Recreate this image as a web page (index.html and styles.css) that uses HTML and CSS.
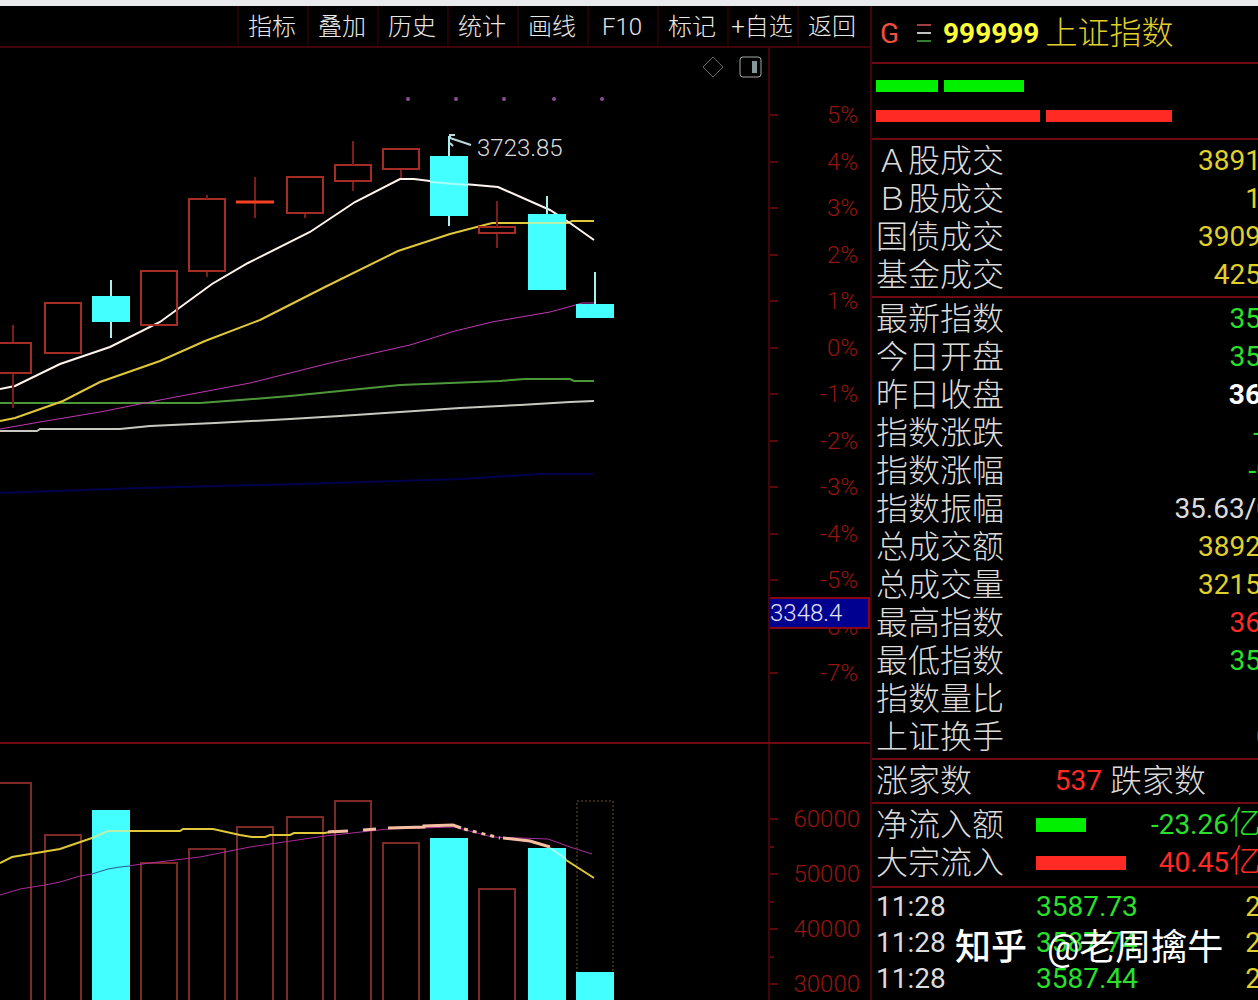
FILE: index.html
```html
<!DOCTYPE html>
<html lang="zh-CN">
<head>
<meta charset="utf-8">
<meta name="viewport" content="width=device-width, initial-scale=1">
<title>上证指数 999999</title>
<link rel="stylesheet" href="styles.css">
</head>
<body>
<div class="strip"></div>
<div class="terminal">
  <main class="charts">
    <nav class="toolbar">
      <button type="button">指标</button>
      <button type="button">叠加</button>
      <button type="button">历史</button>
      <button type="button">统计</button>
      <button type="button">画线</button>
      <button type="button">F10</button>
      <button type="button">标记</button>
      <button type="button">+自选</button>
      <button type="button">返回</button>
    </nav>

    <section class="panel price">
      <svg class="plot" viewBox="0 48 768 694" role="img" aria-label="K线图">
        <g class="ma">
          <polyline class="navy" points="0,493 140,488 300,484 460,479 540,474 594,474"/>
          <polyline class="pale" points="0,431 37,431 40,429 120,429 150,426 215,423 290,419 340,416 400,412 460,408 520,405 570,402 594,401"/>
          <polyline class="green" points="0,403 200,403 240,400 290,396 340,391 400,385 500,381 525,379 570,379 574,381 594,381"/>
          <polyline class="magenta" points="0,429 40,422 100,412 160,400 250,383 330,363 410,345 455,331 492,322 550,312 572,306 582,303 594,303"/>
          <polyline class="yellow" points="0,421 15,418 63,401 100,382 160,361 205,341 260,320 325,287 398,251 450,234 492,223 568,223 572,221 594,221"/>
          <polyline class="white" points="0,389 15,386 60,364 110,347 160,322 212,284 248,263 310,232 355,202 400,179 414,179 430,181 498,187 550,210 570,223 594,240"/>
        </g>
        <g class="up">
          <rect x="-5" y="343" width="36" height="30"/><path d="M13 325V342M13 374V408"/>
          <rect x="45" y="303" width="36" height="50"/>
          <rect x="141" y="271" width="36" height="54"/>
          <rect x="189" y="199" width="36" height="72"/><path d="M207 195V199M207 272V277"/>
          <path d="M255 177V218"/>
          <rect x="287" y="177" width="36" height="36"/><path d="M305 214V218"/>
          <rect x="335" y="165" width="36" height="16"/><path d="M353 141V165M353 182V191"/>
          <rect x="383" y="149" width="36" height="20"/><path d="M401 170V178"/>
          <rect x="479" y="227" width="36" height="6"/><path d="M497 201V227M497 234V248"/>
        </g>
        <path class="doji" d="M236 202H274"/>
        <g class="wick"><path d="M111 280V338M449 136V226M547 196V214M595 272V304"/></g>
        <g class="down">
          <rect x="92" y="296" width="38" height="26"/>
          <rect x="430" y="156" width="38" height="60"/>
          <rect x="528" y="214" width="38" height="76"/>
          <rect x="576" y="304" width="38" height="14"/>
        </g>
        <path class="ghost" d="M430 182L468 185"/>
        <path class="ghost-warm" d="M528 223H566"/>
        <path class="pointer" d="M455 135H450V138L471 145M450 143L453 146"/>
        <text class="peak" x="477" y="156">3723.85</text>
        <g class="dots">
          <circle cx="408" cy="99" r="2"/><circle cx="456" cy="99" r="2"/><circle cx="504" cy="99" r="2"/><circle cx="554" cy="99" r="2"/><circle cx="602" cy="99" r="2"/>
        </g>
        <path class="diamond" d="M713 57L723 67L713 77L703 67Z"/>
        <rect class="pane" x="740" y="57" width="21" height="20" rx="3"/>
        <rect class="pane-fill" x="752" y="61" width="5" height="12"/>
      </svg>
      <div class="axis">
        <ol class="scale percent">
          <li>5%</li><li>4%</li><li>3%</li><li>2%</li><li>1%</li><li>0%</li><li>-1%</li><li>-2%</li><li>-3%</li><li>-4%</li><li>-5%</li><li>-6%</li><li>-7%</li>
        </ol>
        <output class="cursor">3348.4</output>
      </div>
    </section>

    <section class="panel volume">
      <svg class="plot" viewBox="0 744 768 256" role="img" aria-label="成交量">
        <g class="up">
          <rect x="-5" y="783" width="36" height="230"/>
          <rect x="45" y="835" width="36" height="180"/>
          <rect x="141" y="863" width="36" height="150"/>
          <rect x="189" y="849" width="36" height="160"/>
          <rect x="237" y="827" width="36" height="180"/>
          <rect x="287" y="817" width="36" height="190"/>
          <rect x="335" y="801" width="36" height="210"/>
          <rect x="383" y="843" width="36" height="170"/>
          <rect x="479" y="889" width="36" height="120"/>
        </g>
        <rect class="forecast" x="577" y="801" width="36" height="180"/>
        <g class="ma">
          <polyline class="magenta" points="0,895 20,889 45,885 60,882 80,876 92,874 120,867 150,863 200,857 250,847 325,836 388,829 455,827 492,837 548,839 570,847 592,854"/>
          <polyline class="yellow" points="0,863 12,857 30,854 60,849 92,838 110,831 180,831 183,829 213,829 240,835 252,837 265,837 270,835 290,835 294,833 325,833 334,831"/>
          <polyline class="yellow" points="552,849 566,860 594,878"/>
          <polyline class="peach" points="328,832 348,831"/>
          <polyline class="peach" points="363,830 376,829"/>
          <polyline class="peach" points="388,828 424,827 424,826 453,825 461,828"/>
          <polyline class="peach dashed" points="464,829 500,838"/>
          <polyline class="peach" points="503,838 530,841 550,847"/>
        </g>
        <g class="down">
          <rect x="92" y="810" width="38" height="190"/>
          <rect x="430" y="838" width="38" height="162"/>
          <rect x="528" y="848" width="38" height="152"/>
          <rect x="576" y="972" width="38" height="28"/>
        </g>
        <polyline class="ghost-warm" points="92,838 108,831 130,831"/>
        <polyline class="shade" points="92,874 108,869 120,867 130,866"/>
        <path class="ghost" d="M550 848L566 859"/>
      </svg>
      <div class="axis">
        <ol class="scale amount">
          <li>60000</li><li>50000</li><li>40000</li><li>30000</li>
        </ol>
      </div>
    </section>
  </main>

  <aside class="quote">
    <header class="title">
      <span class="flag">G</span>
      <svg class="menu" viewBox="0 0 16 20" aria-hidden="true"><path class="m1" d="M1 2H15"/><path class="m2" d="M1 10H15"/><path class="m3" d="M1 18H15"/></svg>
      <span class="code">999999</span>
      <h1>上证指数</h1>
    </header>

    <div class="meters">
      <div class="meter"><i class="fill fall" style="width:62px"></i><i class="fill fall" style="width:80px"></i></div>
      <div class="meter"><i class="fill rise" style="width:164px"></i><i class="fill rise" style="width:126px"></i></div>
    </div>

    <table class="block">
      <tr><th scope="row">Ａ股成交</th><td class="gold">3891</td></tr>
      <tr><th scope="row">Ｂ股成交</th><td class="gold">1</td></tr>
      <tr><th scope="row">国债成交</th><td class="gold">3909</td></tr>
      <tr><th scope="row">基金成交</th><td class="gold">425</td></tr>
    </table>

    <table class="block">
      <tr><th scope="row">最新指数</th><td class="lime">35</td></tr>
      <tr><th scope="row">今日开盘</th><td class="lime">35</td></tr>
      <tr><th scope="row">昨日收盘</th><td class="strong">36</td></tr>
      <tr><th scope="row">指数涨跌</th><td class="lime">-</td></tr>
      <tr><th scope="row">指数涨幅</th><td class="lime"><span class="cut">-0</span></td></tr>
      <tr><th scope="row">指数振幅</th><td><span class="cut">35.63/0</span></td></tr>
      <tr><th scope="row">总成交额</th><td class="gold">3892</td></tr>
      <tr><th scope="row">总成交量</th><td class="gold">3215</td></tr>
      <tr><th scope="row">最高指数</th><td class="red">36</td></tr>
      <tr><th scope="row">最低指数</th><td class="lime">35</td></tr>
      <tr><th scope="row">指数量比</th><td></td></tr>
      <tr><th scope="row">上证换手</th><td><span class="cut">0</span></td></tr>
    </table>

    <div class="block breadth">
      <span class="name">涨家数</span><span class="count red">537</span><span class="name">跌家数</span>
    </div>

    <table class="block flow">
      <tr><th scope="row">净流入额</th><td class="bar"><i class="fill fall" style="width:50px"></i></td><td class="lime">-23.26<span class="unit">亿</span></td></tr>
      <tr><th scope="row">大宗流入</th><td class="bar"><i class="fill rise" style="width:90px"></i></td><td class="red">40.45<span class="unit">亿</span></td></tr>
    </table>

    <table class="ticks">
      <tr><td>11:28</td><td class="deal lime">3587.73</td><td class="gold">2</td></tr>
      <tr><td>11:28</td><td class="deal lime">3587.74</td><td class="gold">2</td></tr>
      <tr><td>11:28</td><td class="deal lime">3587.44</td><td class="gold">2</td></tr>
    </table>

    <div class="credit"><b>知乎</b><span>@老周擒牛</span></div>
  </aside>
</div>
</body>
</html>
```
FILE: styles.css
```css
:root {
  --line: #6e0a10;
  --line-dim: #420408;
  --red: #ff2a24;
  --lime: #2be02b;
  --gold: #e0d02c;
  --text: #dcdcdc;
  --cyan: #44ffff;
}

* { box-sizing: border-box; }

body {
  margin: 0;
  background: #000;
  color: var(--text);
  font-family: Roboto, "Noto Sans CJK SC", sans-serif;
  font-size: 28px;
}

.strip { height: 6px; background: #e8eaec; }

.terminal {
  display: grid;
  grid-template-columns: minmax(0, 1fr) 388px;
  overflow: hidden;
}

/* Toolbar */
.toolbar {
  display: flex;
  justify-content: flex-end;
  height: 42px;
  padding-right: 3px;
  border-bottom: 2px solid var(--line-dim);
}

.toolbar button {
  width: 70px;
  padding: 2px 2px 0 0;
  border: 0;
  border-left: 2px solid #200204;
  background: none;
  color: #e8e8e8;
  font: 300 24px/38px Roboto, "Noto Sans CJK SC", sans-serif;
  white-space: nowrap;
}

/* Charts */
.panel {
  display: grid;
  grid-template-columns: minmax(0, 1fr) 102px;
}

.price { border-bottom: 2px solid var(--line); }

.plot { display: block; width: 100%; height: auto; }

.axis {
  position: relative;
  border-left: 2px solid var(--line-dim);
}

.scale {
  display: flex;
  flex-direction: column;
  height: 100%;
  margin: 0;
  padding: 0 12px 0 0;
  list-style: none;
  color: #96160f;
  font-size: 24px;
  font-weight: 300;
  text-align: right;
}

.scale li { position: relative; }

.scale li::before,
.amount li::after {
  content: "";
  position: absolute;
  left: 0;
  top: 50%;
  width: 8px;
  height: 2px;
  margin-top: -1px;
  background: #5a080a;
}

.percent { justify-content: space-between; padding-top: 51px; padding-bottom: 53px; }
.percent li { line-height: 32px; }

.amount { gap: 27px; padding-top: 61px; padding-right: 10px; }
.amount li { line-height: 28px; }
.amount li::after { top: 42px; width: 4px; }

.cursor {
  position: absolute;
  top: 549px;
  left: 0;
  right: 0;
  border: 2px solid #8a0418;
  border-width: 2px 2px 2px 0;
  background: #000090;
  color: #e4e0f0;
  font-size: 24px;
  font-weight: 300;
  line-height: 28px;
}

.ma polyline { fill: none; stroke-width: 2; }
.ma .white { stroke: #fff4ee; }
.ma .pale { stroke: #c8c8c0; }
.ma .yellow { stroke: #e0c838; }
.ma .green { stroke: #4c9838; }
.ma .magenta { stroke: #a82c9c; stroke-width: 1; }
.price .ma .magenta { stroke: #c038b4; }
.ma .navy { stroke: #00004c; }
.ma .peach { stroke: #f6bea0; stroke-width: 3; }
.ma .dashed { stroke-dasharray: 4 5; }

.up { fill: none; stroke: #a42c24; stroke-width: 2; shape-rendering: crispEdges; }
.up path { stroke: #7c1c18; }
.volume .up { stroke: #7e2a24; }
.doji { stroke: #f84024; stroke-width: 3; }
.down { fill: var(--cyan); }
.wick { stroke: #a8f0f0; stroke-width: 2; }
.ghost { fill: none; stroke: #a8ffff; stroke-width: 2; }
.ghost-warm { fill: none; stroke: #b8f0b0; stroke-width: 2; }
.shade { fill: none; stroke: #285c90; stroke-width: 1; }
.forecast { fill: none; stroke: #6c5024; stroke-dasharray: 2 2; }
.pointer { fill: none; stroke: #b8dcdc; stroke-width: 2; }
.peak { fill: var(--text); font-size: 24px; font-weight: 300; }
.dots { fill: #8c4c98; }
.diamond { fill: none; stroke: #686868; }
.pane { fill: none; stroke: #a4a8a8; stroke-width: 1; }
.pane-fill { fill: #84989c; }

/* Quote column */
.quote {
  position: relative;
  overflow: hidden;
  border-left: 2px solid var(--line-dim);
}

.title {
  display: flex;
  align-items: center;
  height: 58px;
  padding: 0 0 2px 8px;
  border-bottom: 2px solid var(--line);
}

.flag { width: 36px; color: #f0503c; }
.menu { width: 16px; height: 20px; margin-right: 11px; fill: none; stroke-width: 2; }
.m1 { stroke: #a04040; }
.m2 { stroke: #c0c0c0; }
.m3 { stroke: #308030; }
.code { margin-right: 6px; color: #ffff38; font-weight: 700; }
.title h1 { margin: 0; color: var(--gold); font-size: 32px; font-weight: 300; line-height: 48px; }

.meters {
  display: grid;
  gap: 18px;
  padding: 16px 4px;
  border-bottom: 2px solid var(--line);
}

.meter { display: flex; gap: 6px; }
.fill { display: block; height: 12px; }
.fall { background: #00f000; }
.rise { background: var(--red); }

.block,
.ticks {
  width: calc(100% + 3px);
  border-spacing: 0;
}

.block { padding: 2px 0 2px 4px; border-bottom: 2px solid var(--line); }

th, td {
  height: 38px;
  padding: 0;
  line-height: 38px;
  font-weight: 400;
  vertical-align: middle;
  white-space: nowrap;
  text-align: right;
}

th, .name {
  font-size: 32px;
  font-weight: 300;
  text-align: left;
}

th { width: 160px; }

.cut { margin-right: -11px; }
.gold { color: var(--gold); }
.lime { color: var(--lime); }
.red { color: var(--red); }
.strong { color: #fff; font-weight: 700; }

.breadth { display: flex; align-items: center; line-height: 38px; }
.count { width: 130px; margin-right: 8px; text-align: right; }

.flow { padding-bottom: 4px; }
.bar { width: 90px; }
.bar .fill { height: 14px; }
.unit { font-size: 32px; font-weight: 300; line-height: 1px; }

.ticks { padding: 1px 0 0 4px; }
.ticks td { height: 36px; line-height: 36px; }
.ticks td:first-child { width: 160px; text-align: left; }
.ticks .deal { text-align: left; }

.credit {
  position: absolute;
  left: 83px;
  bottom: 34px;
  display: flex;
  gap: 20px;
  color: #fff;
  font-size: 36px;
  line-height: 36px;
}

.credit b { font-weight: 500; }
```
